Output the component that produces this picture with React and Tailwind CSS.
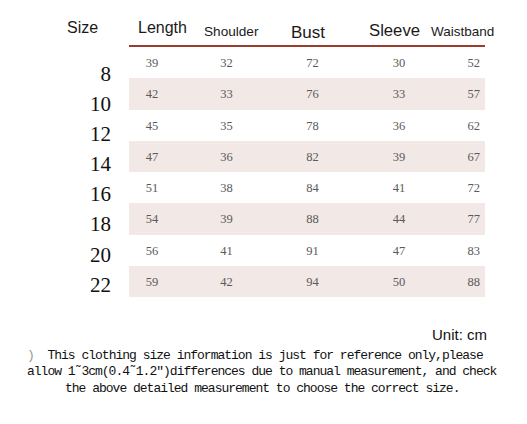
const rows = [
  [39, 32, 72, 30, 52],
  [42, 33, 76, 33, 57],
  [45, 35, 78, 36, 62],
  [47, 36, 82, 39, 67],
  [51, 38, 84, 41, 72],
  [54, 39, 88, 44, 77],
  [56, 41, 91, 47, 83],
  [59, 42, 94, 50, 88],
];
const sizes = [8, 10, 12, 14, 16, 18, 20, 22];

export default function App() {
  return (
    <div className="w-[527px] h-[424px] bg-white text-[#1a1a1a] font-['Liberation_Sans',Arial,sans-serif] overflow-hidden">
      {/* header */}
      <div className="flex h-[47px]">
        <div className="w-[129px] shrink-0 pl-[67px] pt-[19.5px] text-[16px] leading-none">Size</div>
        <div className="w-[356px] shrink-0 flex border-b-2 border-[#983c2c] whitespace-nowrap">
          <div className="w-[75px] shrink-0 pl-[9px] pt-[19.5px] text-[16px] leading-none">Length</div>
          <div className="w-[87px] shrink-0 pt-[24.6px] text-[13.6px] leading-none">Shoulder</div>
          <div className="w-[78px] shrink-0 pt-[23.6px] text-[17px] leading-none">Bust</div>
          <div className="w-[62px] shrink-0 pt-[23px] text-[16.7px] leading-none">Sleeve</div>
          <div className="w-[54px] shrink-0 pt-[24.6px] text-[13.5px] leading-none">Waistband</div>
        </div>
      </div>

      {/* body */}
      <div className="flex">
        <div className="w-[111px] shrink-0 pt-[12px] text-right font-['Liberation_Serif',serif] text-[21px] text-[#111]">
          {sizes.map((s) => (
            <div key={s} className="h-[30.1px] leading-[30.1px]">{s}</div>
          ))}
        </div>
        <div className="ml-[18px] w-[356px] shrink-0 font-['Liberation_Serif',serif] text-[12.5px] text-[#5a5a5a]">
          {rows.map((r, i) => (
            <div key={i} className={`flex h-[31.25px] pt-[10px] leading-none ${i % 2 === 1 ? 'bg-[#f2e8e6]' : ''}`}>
              <div className="w-[46px] text-center">{r[0]}</div>
              <div className="w-[103px] text-center">{r[1]}</div>
              <div className="w-[69px] text-center">{r[2]}</div>
              <div className="w-[104px] text-center">{r[3]}</div>
              <div className="flex-1 text-right pr-[5px]">{r[4]}</div>
            </div>
          ))}
        </div>
      </div>

      {/* footer */}
      <div className="flex justify-end pr-[40px] mt-[27px] text-[15px] leading-none text-[#111]">Unit: cm</div>
      <div className="mt-[6px] font-['Liberation_Mono',monospace] text-[13px] leading-[16.5px] tracking-[-1px] text-[#111] whitespace-pre">
        <div className="pl-[27px]"><span className="text-[#999]">)</span>{"  This clothing size information is just for reference only,please"}</div>
        <div className="pl-[27px]">{"allow 1˜3cm(0.4˜1.2″)differences due to manual measurement, and check"}</div>
        <div className="pl-[65px]">{"the above detailed measurement to choose the correct size."}</div>
      </div>
    </div>
  );
}
